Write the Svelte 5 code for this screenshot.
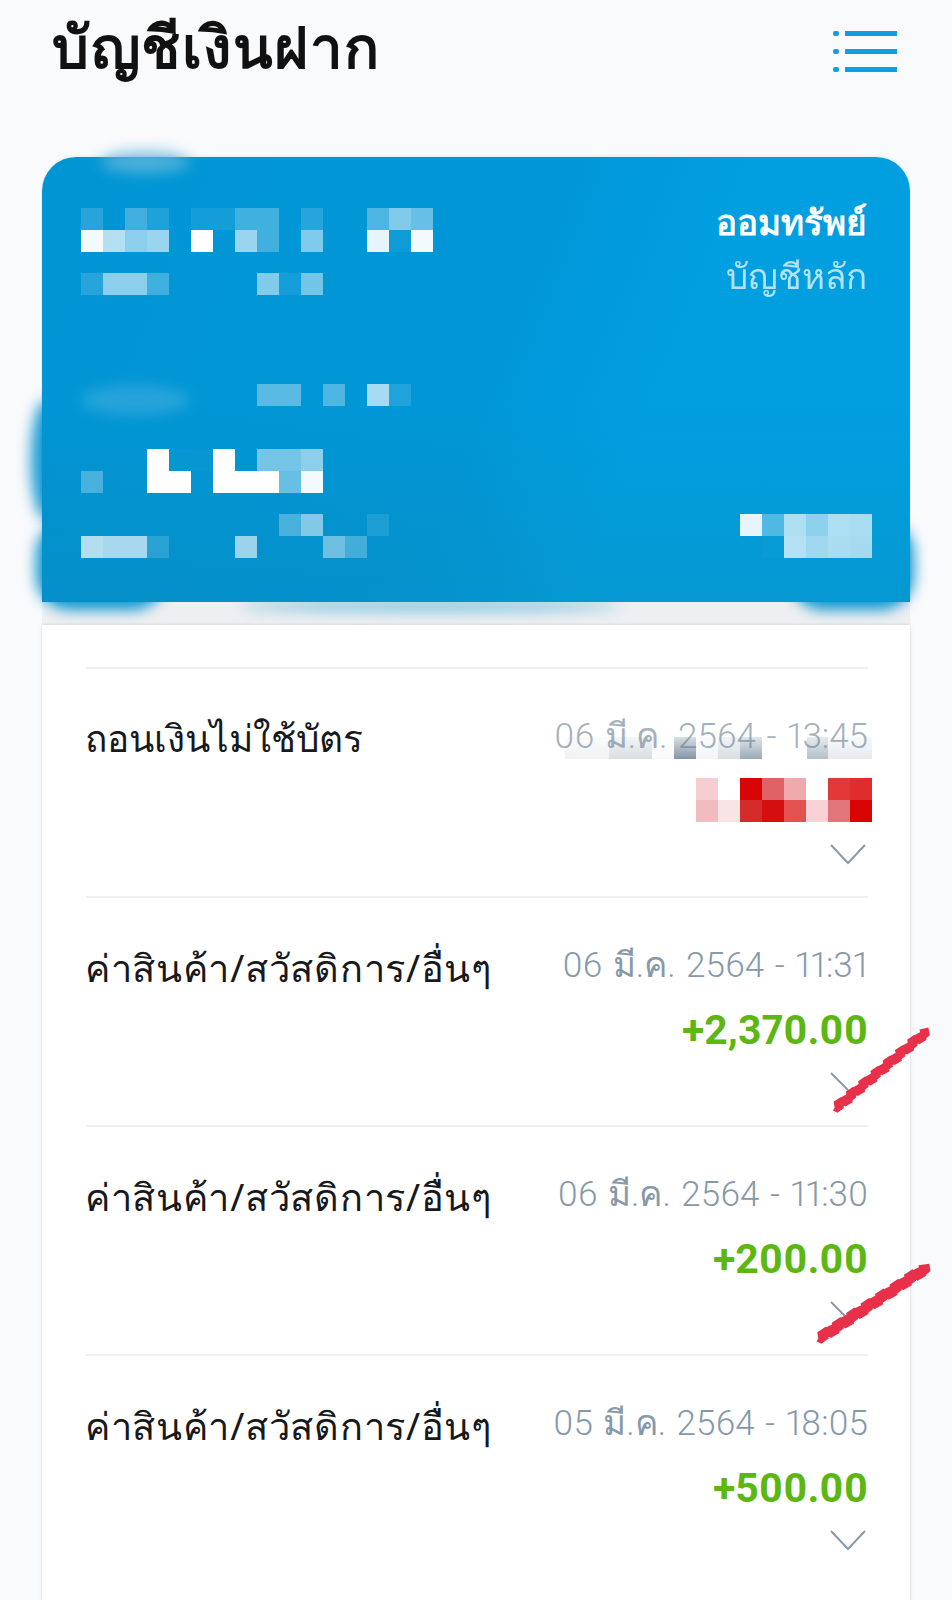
<script lang="ts">
  type Row = { title: string; date: string; amount?: string; masked?: boolean; scribbled?: boolean }

  const rows: Row[] = [
    { title: 'ถอนเงินไม่ใช้บัตร', date: '06 มี.ค. 2564 - 13:45', masked: true },
    { title: 'ค่าสินค้า/สวัสดิการ/อื่นๆ', date: '06 มี.ค. 2564 - 11:31', amount: '+2,370.00', scribbled: true },
    { title: 'ค่าสินค้า/สวัสดิการ/อื่นๆ', date: '06 มี.ค. 2564 - 11:30', amount: '+200.00', scribbled: true },
    { title: 'ค่าสินค้า/สวัสดิการ/อื่นๆ', date: '05 มี.ค. 2564 - 18:05', amount: '+500.00' }
  ]

  // pixelated account details: white at the given opacity
  const nameBlock = [
    [0.15, 0, 0.25, 0.12, 0, 0.08, 0.08, 0.25, 0.25, 0, 0.15, 0, 0, 0.3, 0.5, 0.4],
    [0.95, 0.7, 0.55, 0.6, 0, 1, 0, 0.6, 0.25, 0, 0.5, 0, 0, 0.9, 0.05, 0.95]
  ]
  const subBlock = [[0.15, 0.55, 0.55, 0.25, 0, 0, 0, 0, 0.5, 0.08, 0.45]]
  const labelBlock = [[0, 0, 0, 0, 0, 0, 0, 0, 0.35, 0.35, 0, 0.3, 0, 0.65, 0.12], [0]]
  const balanceBlock = [
    [0, 0, 0, 1, 0.02, 0.02, 1, 0, 0.45, 0.45, 0.55],
    [0.28, 0, 0, 1, 1, 0, 1, 1, 1, 0.4, 0.95]
  ]
  const footBlock = [
    [0, 0, 0, 0, 0, 0, 0, 0, 0, 0.28, 0.5, 0, 0, 0.1],
    [0.7, 0.65, 0.65, 0.15, 0, 0, 0, 0.6, 0, 0, 0, 0.42, 0.25]
  ]
  const cornerBlock = [
    [0.9, 0.3, 0.68, 0.55, 0.68, 0.66],
    [0, 0.02, 0.7, 0.62, 0.66, 0.64]
  ]
  const redBlock = [
    ['#f6cdd0', 'transparent', '#d90404', '#df6266', '#f0a9ac', 'transparent', '#e23838', '#df2c2c'],
    ['#f1bcc0', '#f9e4e5', '#d62b2b', '#d50f0f', '#e35252', '#f8d2d4', '#e1757a', '#d90404']
  ]
  const smearCells = [
    { w: 44, a: 0.08 }, { w: 43, a: 0.2 }, { w: 22, a: 0.03 }, { w: 22, a: 0.62 },
    { w: 22, a: 0.06 }, { w: 22, a: 0.2 }, { w: 22, a: 0.5 }, { w: 45, a: 0 }, { w: 21, a: 0.38 }, { w: 44, a: 0.12 }
  ]

  function jagged(x1: number, y1: number, x2: number, y2: number): string {
    // rough felt-pen line, zig-zagging around the straight stroke
    const steps = 44
    const out: string[] = []
    for (let i = 0; i <= steps; i++) {
      const t = i / steps
      const off = (i % 2 ? 1 : -1) * (1.5 + (i * 7) % 3)
      out.push(`${(x1 + (x2 - x1) * t + off * 0.6).toFixed(1)},${(y1 + (y2 - y1) * t + off).toFixed(1)}`)
    }
    return out.join(' ')
  }
</script>

{#snippet mosaic(cells: number[][])}
  <div class="mosaic">
    {#each cells as line}
      <div class="mosaic-row">
        {#each line as a}
          <span class="cell" style="background: rgba(255, 255, 255, {a})"></span>
        {/each}
      </div>
    {/each}
  </div>
{/snippet}

<div class="page">
  <header>
    <h1>บัญชีเงินฝาก</h1>
    <svg class="menu" width="66" height="44" viewBox="0 0 66 44" aria-hidden="true">
      <g fill="#0d9fdf">
        <rect x="1" y="2" width="6" height="5" rx="2" />
        <rect x="13" y="2" width="52" height="5" />
        <rect x="1" y="20" width="6" height="5" rx="2" />
        <rect x="13" y="20" width="52" height="5" />
        <rect x="1" y="38" width="6" height="5" rx="2" />
        <rect x="13" y="38" width="52" height="5" />
      </g>
    </svg>
  </header>

  <section class="card">
    <div class="card-top">
      <div class="stack-top">
        {@render mosaic(nameBlock)}
        {@render mosaic(subBlock)}
      </div>
      <div class="type">
        <strong>ออมทรัพย์</strong>
        <span>บัญชีหลัก</span>
      </div>
    </div>
    <div class="card-bottom">
      <div class="stack-bottom">
        {@render mosaic(labelBlock)}
        {@render mosaic(balanceBlock)}
        {@render mosaic(footBlock)}
      </div>
      {@render mosaic(cornerBlock)}
    </div>
  </section>

  <div class="band"></div>

  <section class="list">
    {#each rows as row}
      <article class="row">
        <div class="title" class:short={row.masked}>{row.title}</div>
        <div class="meta">
          <div class="date" class:faded={row.masked}>
            {row.date}
            {#if row.masked}
              <div class="smear">
                {#each smearCells as c}
                  <span style="width: {c.w}px; background: linear-gradient(rgba(100, 125, 145, {c.a * 0.4}), rgba(100, 125, 145, {c.a * 1.3}))"></span>
                {/each}
              </div>
            {/if}
          </div>
          {#if row.masked}
            <div class="mosaic red">
              {#each redBlock as line}
                <div class="mosaic-row">
                  {#each line as color}
                    <span class="cell" style="background: {color}"></span>
                  {/each}
                </div>
              {/each}
            </div>
          {:else}
            <div class="amount">{row.amount}</div>
          {/if}
          <svg class="chev" width="36" height="22" viewBox="0 0 36 22" aria-hidden="true">
            <path d={row.scribbled ? 'M1 1 L18 18' : 'M1 1 L18 19 L35 1'} fill="none" stroke="#8a9aa8" stroke-width="2" />
          </svg>
        </div>
      </article>
    {/each}
  </section>

  <!-- blur smudges and pen marks lying over the screenshot -->
  <div class="blob b1"></div>
  <div class="blob b2"></div>
  <div class="blob b3"></div>
  <div class="blob b4"></div>
  <div class="blob b5"></div>
  <div class="blob b7"></div>
  <svg class="pen" width="952" height="1600" viewBox="0 0 952 1600" aria-hidden="true">
    <polyline points={jagged(836, 1108, 926, 1032)} fill="none" stroke="#e8304a" stroke-width="9" stroke-linejoin="bevel" />
    <polyline points={jagged(820, 1338, 926, 1268)} fill="none" stroke="#e8304a" stroke-width="11" stroke-linejoin="bevel" />
  </svg>
</div>

<style>
  :global(body) {
    margin: 0;
    background: #f9fafc;
  }

  .page {
    position: relative;
    width: 952px;
    height: 1600px;
    overflow: hidden;
    background: #f9fafc;
    font-family: 'Noto Sans', 'DejaVu Sans', sans-serif;
  }

  header {
    display: flex;
    align-items: flex-start;
    justify-content: space-between;
    height: 157px;
    box-sizing: border-box;
    padding: 10px 54px 0 52px;
  }

  h1 {
    margin: 0;
    font-size: 58px;
    line-height: 72px;
    letter-spacing: 1.5px;
    font-weight: 700;
    color: #111;
  }

  .menu {
    margin-top: 19px;
  }

  .card {
    position: relative;
    z-index: 1;
    display: flex;
    flex-direction: column;
    justify-content: space-between;
    box-sizing: border-box;
    width: 868px;
    height: 445px;
    margin-left: 42px;
    padding: 51px 38px 44px 39px;
    border-radius: 34px 34px 0 0;
    background:
      linear-gradient(112deg, rgba(0, 60, 110, 0.1) 0%, rgba(0, 60, 110, 0.08) 52%, transparent 68%),
      linear-gradient(180deg, #019fe0 0%, #019fe0 55%, #0598d2 100%);
    box-shadow: 0 -1px 3px rgba(0, 0, 0, 0.08);
  }

  .card-top,
  .card-bottom {
    display: flex;
    justify-content: space-between;
  }

  .card-bottom {
    align-items: flex-end;
  }

  .stack-top,
  .stack-bottom {
    display: flex;
    flex-direction: column;
    gap: 21px;
  }

  .mosaic-row {
    display: flex;
    min-height: 22px;
  }

  .cell {
    flex: none;
    width: 22px;
    height: 22px;
  }

  .type {
    display: flex;
    flex-direction: column;
    align-items: flex-end;
    gap: 10px;
    margin-top: -8px;
    padding-right: 5px;
    color: #fff;
  }

  .type strong {
    font-size: 35px;
    line-height: 44px;
    font-weight: 700;
  }

  .type span {
    font-size: 35px;
    line-height: 44px;
    font-weight: 300;
    opacity: 0.7;
  }

  .band {
    height: 23px;
    margin: 0 42px;
    background: #eeeff1;
  }

  .list {
    position: relative;
    z-index: 1;
    box-sizing: border-box;
    width: 868px;
    height: 1000px;
    margin-left: 42px;
    padding: 42px 42px 0 44px;
    background: #fff;
    box-shadow: 0 0 3px rgba(90, 110, 130, 0.25);
  }

  .row {
    display: flex;
    justify-content: space-between;
    box-sizing: border-box;
    height: 229px;
    padding-top: 46px;
    border-top: 2px solid #eff0f2;
  }

  .title {
    margin: -1px 0 0 -1px;
    font-size: 38px;
    line-height: 48px;
    letter-spacing: 0.7px;
    color: #17191c;
  }

  .title.short {
    font-size: 37px;
    letter-spacing: 0;
  }

  .meta {
    display: flex;
    flex-direction: column;
    align-items: flex-end;
  }

  .date {
    position: relative;
    font-family: Roboto, 'Noto Sans', sans-serif;
    font-size: 35px;
    line-height: 44px;
    font-weight: 300;
    font-variant-numeric: proportional-nums;
    word-spacing: 2px;
    color: #8799a8;
    white-space: nowrap;
  }

  .date.faded {
    color: #a4b1bc;
  }

  .smear {
    position: absolute;
    right: -4px;
    top: 22px;
    display: flex;
    height: 22px;
  }

  .amount {
    margin-top: 18px;
    font-family: Roboto, 'Noto Sans', sans-serif;
    font-size: 41px;
    line-height: 48px;
    font-weight: 700;
    font-variant-numeric: proportional-nums;
    color: #5cb713;
  }

  .red {
    margin: 19px -4px 0 0;
  }

  .chev {
    margin: 18px 2px 0 0;
  }

  .red + .chev {
    margin-top: 22px;
  }

  .blob {
    position: absolute;
    filter: blur(7px);
    border-radius: 50%;
  }

  .b1 {
    z-index: 2;
    left: 100px;
    top: 151px;
    width: 90px;
    height: 22px;
    background: #62b8dc;
    opacity: 0.8;
  }

  .b2 {
    left: 31px;
    top: 400px;
    width: 30px;
    height: 120px;
    background: #1a9bd3;
  }

  .b3 {
    left: 36px;
    top: 520px;
    width: 130px;
    height: 90px;
    border-radius: 34px;
    background: #0f97d0;
  }

  .b4 {
    left: 790px;
    top: 520px;
    width: 124px;
    height: 90px;
    border-radius: 34px;
    background: #0f97d0;
  }

  .b5 {
    left: 240px;
    top: 601px;
    width: 380px;
    height: 10px;
    background: #6fbfe0;
  }

  .b7 {
    z-index: 2;
    left: 80px;
    top: 385px;
    width: 110px;
    height: 30px;
    background: #3faedd;
    opacity: 0.6;
  }

  .pen {
    position: absolute;
    z-index: 3;
    left: 0;
    top: 0;
    pointer-events: none;
  }
</style>
